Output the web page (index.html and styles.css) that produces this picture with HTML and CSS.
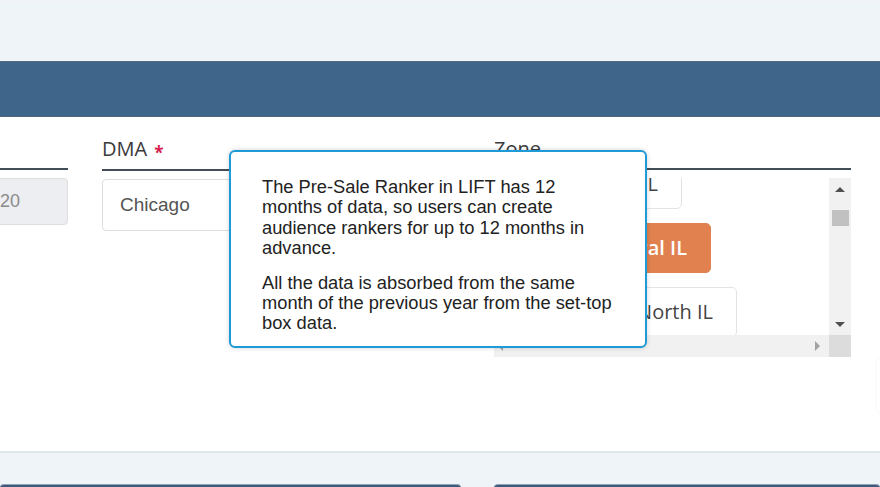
FILE: index.html
```html
<!DOCTYPE html>
<html lang="en">
<head>
<meta charset="utf-8">
<title>Pre-Sale Ranker</title>
<link rel="stylesheet" href="styles.css">
</head>
<body>
<div class="page">
  <div class="topband"></div>
  <div class="header"></div>
  <div class="card">
    <div class="fields">
      <div class="col col-left">
        <div class="label">&nbsp;</div>
        <div class="input input-disabled">2020</div>
      </div>
      <div class="col col-dma">
        <div class="label">DMA <span class="req">*</span></div>
        <div class="input">Chicago</div>
      </div>
      <div class="col col-zone">
        <div class="label">Zone</div>
        <div class="listbox">
          <div class="list-content">
            <div class="tag tag-1">Rockford IL</div>
            <div class="tag tag-2">Central IL</div>
            <div class="tag tag-3">North IL</div>
          </div>
          <div class="vscroll">
            <div class="sb-btn"><span class="arrow-up"></span></div>
            <div class="thumb"></div>
            <div class="sb-fill"></div>
            <div class="sb-btn"><span class="arrow-down"></span></div>
          </div>
          <div class="hscroll">
            <span class="arrow-left"></span>
            <span class="arrow-right"></span>
          </div>
          <div class="corner"></div>
        </div>
      </div>
    </div>
  </div>
  <div class="lower">
    <div class="panel-top panel-a"></div>
    <div class="panel-top panel-b"></div>
  </div>

  <div class="tooltip">
    <p>The Pre-Sale Ranker in LIFT has 12<br>months of data, so users can create<br>audience rankers for up to 12 months in<br>advance.</p>
    <p>All the data is absorbed from the same<br>month of the previous year from the set-top<br>box data.</p>
  </div>
  <div class="float-tab"></div>
</div>
</body>
</html>
```
FILE: styles.css
```css
html, body {
  margin: 0;
  padding: 0;
  height: 100%;
  overflow: hidden;
  background: #eef4f7;
  font-family: "Open Sans", "Noto Sans", sans-serif;
}

.page {
  position: relative;
  width: 880px;
  height: 487px;
  overflow: hidden;
  background: #eef4f7;
}

.topband {
  height: 61px;
  box-sizing: border-box;
  border-top: 2px solid #f1f3f7;
  background: #eef4f7;
}

.header {
  height: 56px;
  box-sizing: border-box;
  background: #3f658a;
  border-top: 1px solid #55687d;
  border-bottom: 1px solid #53677b;
}

.card {
  height: 336px;
  box-sizing: border-box;
  background: #ffffff;
  border-bottom: 2px solid #dfe7e9;
  padding-top: 18px;
}

.fields {
  display: flex;
  gap: 34px;
  margin-left: -38px;
}

.col { flex-shrink: 0; }
.col-left { width: 106px; }
.col-dma { width: 358px; }
.col-zone { width: 357px; }

.label {
  font-size: 20px;
  line-height: 27px;
  color: #3a3a3a;
  padding-bottom: 6px;
  border-bottom: 2px solid #424d58;
  white-space: nowrap;
}

.req {
  color: #d8204e;
  font-size: 17px;
  font-weight: 700;
  margin-left: 2px;
  position: relative;
  top: 3px;
}

.input {
  margin-top: 8px;
  height: 52px;
  box-sizing: border-box;
  border: 1px solid #dedede;
  border-radius: 4px;
  padding: 0 17px;
  display: flex;
  align-items: center;
  font-family: "Liberation Sans", Arial, sans-serif;
  font-size: 19px;
  color: #555555;
}

.input-disabled {
  height: 47px;
  background: #eceef1;
  color: #8a8a8a;
  font-size: 18px;
}

.listbox {
  margin-top: 8px;
  height: 179px;
  display: grid;
  grid-template-columns: 1fr 22px;
  grid-template-rows: 1fr 22px;
}

.list-content {
  overflow: hidden;
  display: flex;
  flex-direction: column;
  align-items: flex-end;
  gap: 14px;
  background: #fff;
}

.tag {
  flex-shrink: 0;
  height: 50px;
  box-sizing: border-box;
  border: 1px solid #e3e3e3;
  border-radius: 5px;
  padding: 0 23px;
  font-size: 20px;
  line-height: 48px;
  color: #444;
  background: #fff;
  white-space: nowrap;
}

.tag-1 { margin-top: -19px; margin-right: 147px; }
.tag-2 {
  margin-right: 118px;
  background: #e0814f;
  border-color: #e0814f;
  color: #ffffff;
  font-weight: 600;
}
.tag-3 { margin-right: 92px; }

.vscroll {
  background: #f1f1f1;
  display: flex;
  flex-direction: column;
  align-items: center;
}

.sb-btn {
  height: 22px;
  width: 100%;
  display: flex;
  align-items: center;
  justify-content: center;
}

.arrow-up {
  width: 0;
  height: 0;
  border-left: 5px solid transparent;
  border-right: 5px solid transparent;
  border-bottom: 5px solid #505050;
}

.arrow-down {
  width: 0;
  height: 0;
  border-left: 5px solid transparent;
  border-right: 5px solid transparent;
  border-top: 5px solid #505050;
}

.thumb {
  margin-top: 10px;
  width: 17px;
  height: 16px;
  background: #c1c1c1;
}

.sb-fill { flex: 1; }

.hscroll {
  background: #f1f1f1;
  display: flex;
  align-items: center;
  justify-content: space-between;
  padding: 0 9px 0 4px;
}

.arrow-left {
  width: 0;
  height: 0;
  border-top: 5px solid transparent;
  border-bottom: 5px solid transparent;
  border-right: 5px solid #a3a3a3;
}

.arrow-right {
  width: 0;
  height: 0;
  border-top: 5px solid transparent;
  border-bottom: 5px solid transparent;
  border-left: 5px solid #a3a3a3;
}

.corner { background: #dcdcdc; }

.lower {
  display: flex;
  gap: 33px;
  margin-top: 31px;
}

.panel-top {
  height: 20px;
  box-sizing: border-box;
  background: #3f5a78;
  border-top: 1px solid #8ea3ba;
  border-radius: 4px 4px 0 0;
}

.panel-a { width: 461px; flex-shrink: 0; }
.panel-b { flex: 1; }

.tooltip {
  position: absolute;
  left: 229px;
  top: 150px;
  width: 418px;
  height: 198px;
  box-sizing: border-box;
  background: #ffffff;
  border: 2px solid #1e9ad6;
  border-radius: 6px;
  box-shadow: 0 0 5px rgba(0, 0, 0, 0.18);
  padding: 25px 14px 0 31px;
  font-family: "Liberation Sans", Arial, sans-serif;
  font-size: 18.3px;
  line-height: 20.3px;
  color: #222222;
}

.tooltip p {
  margin: 0 0 14.5px;
  white-space: nowrap;
}

.float-tab {
  position: absolute;
  left: 877px;
  top: 358px;
  width: 40px;
  height: 54px;
  background: #ffffff;
  border-radius: 4px;
  box-shadow: 0 0 3px rgba(0, 0, 0, 0.07);
}
```
